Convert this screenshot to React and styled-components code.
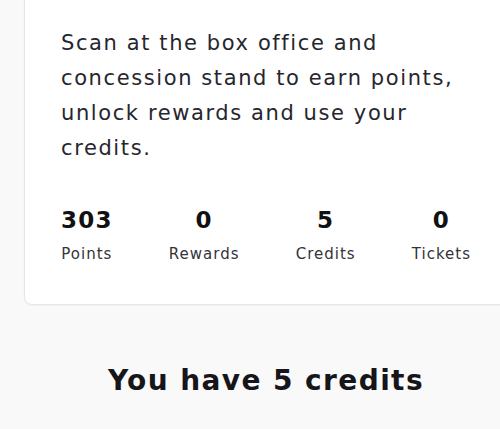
import React from "react";
import styled, { createGlobalStyle } from "styled-components";

const GlobalStyle = createGlobalStyle`
  html, body {
    margin: 0;
    padding: 0;
    background: #f9f9f9;
    overflow: hidden;
  }
  body {
    font-family: "DejaVu Sans", "Open Sans", sans-serif;
    color: #23232b;
  }
`;

const Page = styled.div`
  width: 532px;
  display: flex;
  flex-direction: column;
  align-items: center;
`;

const Card = styled.section`
  box-sizing: border-box;
  width: 484px;
  margin-top: -20px;
  padding: 45px 36px 40px;
  background: #fff;
  border: 1px solid #e6e6e6;
  border-radius: 8px;
  box-shadow: 0 1px 2px rgba(0, 0, 0, 0.04);
`;

const Intro = styled.p`
  margin: 0;
  font-size: 21px;
  line-height: 35px;
  letter-spacing: 1.6px;
  color: #26262e;
`;

const Stats = styled.div`
  display: flex;
  justify-content: space-between;
  margin-top: 40px;
`;

const Stat = styled.div`
  display: flex;
  flex-direction: column;
  align-items: center;
`;

const Value = styled.span`
  font-size: 23px;
  font-weight: 700;
  line-height: 28px;
  letter-spacing: 1.2px;
  color: #111;
`;

const Label = styled.span`
  margin-top: 10px;
  font-size: 15px;
  line-height: 20px;
  letter-spacing: 1px;
  color: #33333a;
`;

const Heading = styled.h2`
  margin: 59px 0 0;
  font-size: 28px;
  font-weight: 700;
  letter-spacing: 1.4px;
  color: #15151a;
`;

const stats = [
  { value: 303, label: "Points" },
  { value: 0, label: "Rewards" },
  { value: 5, label: "Credits" },
  { value: 0, label: "Tickets" },
];

export default function App() {
  return (
    <>
      <GlobalStyle />
      <Page>
        <Card>
          <Intro>
            Scan at the box office and concession stand to earn points, unlock
            rewards and use your credits.
          </Intro>
          <Stats>
            {stats.map((s) => (
              <Stat key={s.label}>
                <Value>{s.value}</Value>
                <Label>{s.label}</Label>
              </Stat>
            ))}
          </Stats>
        </Card>
        <Heading>You have 5 credits</Heading>
      </Page>
    </>
  );
}
